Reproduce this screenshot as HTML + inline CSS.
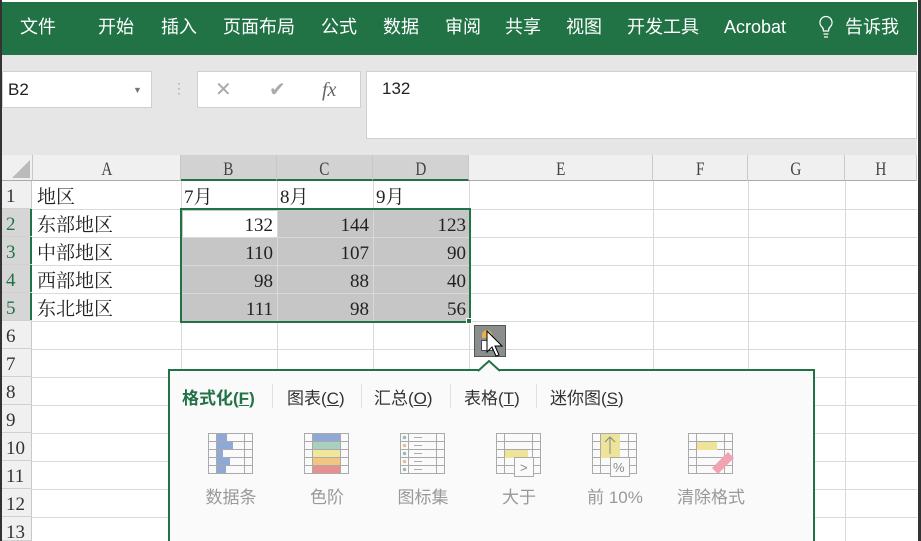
<!DOCTYPE html>
<html><head><meta charset="utf-8"><style>
*{margin:0;padding:0;box-sizing:border-box}
html,body{width:921px;height:541px;overflow:hidden}
body{background:#fff;position:relative;font-family:"Liberation Sans","Noto Sans CJK SC",sans-serif}
.a{position:absolute}
.rib span{position:absolute;top:12px;color:#fff;font-size:18px;line-height:26px;height:26px}
.cell{position:absolute;font-family:"Liberation Serif","Noto Serif CJK SC",serif;font-size:19px;color:#222;line-height:30px;height:28px}
.vl{position:absolute;width:1px;background:#dadada}
.hl{position:absolute;height:1px;background:#dadada}
.ch{position:absolute;top:155px;height:26px;line-height:30px;text-align:center;font-family:"Liberation Serif",serif;font-size:19px;color:#444;border-right:1px solid #c8c8c8}
.ch b{display:inline-block;font-weight:normal;transform:scaleX(.8)}
.rh{position:absolute;left:2px;width:30px;height:28px;line-height:31px;padding-left:4px;font-family:"Liberation Serif",serif;font-size:19px;color:#333;border-bottom:1px solid #d0d0d0}
.tab{position:absolute;top:384px;font-size:17px;color:#333}
.lab{position:absolute;top:483px;font-size:17px;color:#999;text-align:center;width:80px}
</style></head><body>
<div class="a" style="left:0;top:0;width:921px;height:541px;border-left:2px solid #333;border-right:3px solid #333"></div>
<div class="a rib" style="left:2px;top:2px;width:915px;height:53px;background:#217346">
<span style="left:18px">文件</span><span style="left:96px">开始</span><span style="left:159px">插入</span><span style="left:221px">页面布局</span><span style="left:319px">公式</span><span style="left:381px">数据</span><span style="left:443px">审阅</span><span style="left:503px">共享</span><span style="left:564px">视图</span><span style="left:625px">开发工具</span><span style="left:722px">Acrobat</span>
<span style="left:843px">告诉我</span></div>
<svg class="a" style="left:818px;top:15px" width="16" height="24"><path d="M8 1.5a6 6 0 0 0-4 10.5c1 1 1.5 2.5 1.5 4h5c0-1.5.5-3 1.5-4A6 6 0 0 0 8 1.5zM5.5 19h5M6 22h4" fill="none" stroke="#fff" stroke-width="1.3"/></svg>
<div class="a" style="left:2px;top:55px;width:915px;height:100px;background:#e6e6e6"></div>
<div class="a" style="left:2px;top:71px;width:150px;height:37px;background:#fff;border:1px solid #d0d0d0;font-size:17px;color:#222;line-height:36px;padding-left:5px">B2<span style="position:absolute;left:130px;font-size:9px;color:#777">▼</span></div>
<div class="a" style="left:172px;top:80px;color:#aaa;font-size:14px">⋮</div>
<div class="a" style="left:197px;top:71px;width:164px;height:37px;background:#fff;border:1px solid #d0d0d0;color:#aaa;font-size:20px;line-height:36px">
<span style="position:absolute;left:17px">✕</span><span style="position:absolute;left:71px">✔</span><span style="position:absolute;left:124px;font-family:'Liberation Serif',serif;font-style:italic;color:#666">fx</span></div>
<div class="a" style="left:366px;top:71px;width:551px;height:68px;background:#fff;border:1px solid #d0d0d0;font-size:17px;padding:7px 0 0 15px;color:#222">132</div>
<div class="a" style="left:2px;top:155px;width:915px;height:26px;background:#f0f0f0;border-bottom:1px solid #aaa"></div>
<div class="a" style="left:12px;top:160px;width:0;height:0;border-left:18px solid transparent;border-bottom:18px solid #bbb"></div>
<div class="ch" style="left:32px;width:149px;border-left:1px solid #c8c8c8"><b>A</b></div>
<div class="ch" style="left:181px;width:96px;background:#d2d2d2;border-bottom:2px solid #217346"><b>B</b></div>
<div class="ch" style="left:277px;width:96px;background:#d2d2d2;border-bottom:2px solid #217346"><b>C</b></div>
<div class="ch" style="left:373px;width:96px;background:#d2d2d2;border-bottom:2px solid #217346"><b>D</b></div>
<div class="ch" style="left:469px;width:184px"><b>E</b></div>
<div class="ch" style="left:653px;width:95px"><b>F</b></div>
<div class="ch" style="left:748px;width:97px"><b>G</b></div>
<div class="ch" style="left:845px;width:72px"><b>H</b></div>
<div class="vl" style="left:181px;top:181px;height:360px"></div>
<div class="vl" style="left:277px;top:181px;height:360px"></div>
<div class="vl" style="left:373px;top:181px;height:360px"></div>
<div class="vl" style="left:469px;top:181px;height:360px"></div>
<div class="vl" style="left:653px;top:181px;height:360px"></div>
<div class="vl" style="left:748px;top:181px;height:360px"></div>
<div class="vl" style="left:845px;top:181px;height:360px"></div>
<div class="hl" style="left:32px;top:209px;width:885px"></div>
<div class="hl" style="left:32px;top:237px;width:885px"></div>
<div class="hl" style="left:32px;top:265px;width:885px"></div>
<div class="hl" style="left:32px;top:293px;width:885px"></div>
<div class="hl" style="left:32px;top:321px;width:885px"></div>
<div class="hl" style="left:32px;top:349px;width:885px"></div>
<div class="hl" style="left:32px;top:377px;width:885px"></div>
<div class="hl" style="left:32px;top:405px;width:885px"></div>
<div class="hl" style="left:32px;top:433px;width:885px"></div>
<div class="hl" style="left:32px;top:461px;width:885px"></div>
<div class="hl" style="left:32px;top:489px;width:885px"></div>
<div class="hl" style="left:32px;top:517px;width:885px"></div>
<div class="a" style="left:2px;top:181px;width:30px;height:360px;background:#f0f0f0;border-right:1px solid #c8c8c8"></div>
<div class="a" style="left:2px;top:209px;width:30px;height:112px;background:#d6d6d6;border-right:2px solid #217346"></div>
<div class="rh" style="top:181px">1</div><div class="rh" style="top:209px;color:#217346">2</div><div class="rh" style="top:237px;color:#217346">3</div><div class="rh" style="top:265px;color:#217346">4</div><div class="rh" style="top:293px;color:#217346">5</div><div class="rh" style="top:321px">6</div><div class="rh" style="top:349px">7</div><div class="rh" style="top:377px">8</div><div class="rh" style="top:405px">9</div><div class="rh" style="top:433px">10</div><div class="rh" style="top:461px">11</div><div class="rh" style="top:489px">12</div><div class="rh" style="top:517px;height:24px">13</div>
<div class="a" style="left:181px;top:209px;width:288px;height:112px;background:#c6c6c6"></div>
<div class="a" style="left:183px;top:211px;width:94px;height:26px;background:#fff"></div>
<div class="vl" style="left:277px;top:209px;height:112px;background:#d8d8d8"></div>
<div class="vl" style="left:373px;top:209px;height:112px;background:#d8d8d8"></div>
<div class="hl" style="left:181px;top:237px;width:288px;background:#d8d8d8"></div>
<div class="hl" style="left:181px;top:265px;width:288px;background:#d8d8d8"></div>
<div class="hl" style="left:181px;top:293px;width:288px;background:#d8d8d8"></div>
<div class="a" style="left:180px;top:208px;width:291px;height:115px;border:2px solid #217346"></div>
<div class="a" style="left:466px;top:318px;width:6px;height:6px;background:#217346;border:1px solid #fff"></div>
<div class="cell" style="left:37px;top:183px">地区</div>
<div class="cell" style="left:184px;top:183px">7月</div>
<div class="cell" style="left:280px;top:183px">8月</div>
<div class="cell" style="left:376px;top:183px">9月</div>
<div class="cell" style="left:37px;top:211px">东部地区</div>
<div class="cell" style="left:37px;top:239px">中部地区</div>
<div class="cell" style="left:37px;top:267px">西部地区</div>
<div class="cell" style="left:37px;top:295px">东北地区</div>
<div class="cell" style="left:181px;top:211px;width:92px;text-align:right">132</div><div class="cell" style="left:277px;top:211px;width:92px;text-align:right">144</div><div class="cell" style="left:373px;top:211px;width:93px;text-align:right">123</div>
<div class="cell" style="left:181px;top:239px;width:92px;text-align:right">110</div><div class="cell" style="left:277px;top:239px;width:92px;text-align:right">107</div><div class="cell" style="left:373px;top:239px;width:93px;text-align:right">90</div>
<div class="cell" style="left:181px;top:267px;width:92px;text-align:right">98</div><div class="cell" style="left:277px;top:267px;width:92px;text-align:right">88</div><div class="cell" style="left:373px;top:267px;width:93px;text-align:right">40</div>
<div class="cell" style="left:181px;top:295px;width:92px;text-align:right">111</div><div class="cell" style="left:277px;top:295px;width:92px;text-align:right">98</div><div class="cell" style="left:373px;top:295px;width:93px;text-align:right">56</div>
<div class="a" style="left:474px;top:325px;width:32px;height:32px;background:#8a8f8c;border:1px solid #555"></div>
<div class="a" style="left:482px;top:330px;width:10px;height:8px;background:#e8b24a;border-radius:5px 5px 0 0"></div>
<div class="a" style="left:481px;top:340px;width:12px;height:11px;background:#fff;border:1px solid #446"></div>
<svg class="a" style="left:485px;top:330px" width="22" height="28"><path d="M2 1 L2 22 L7 17 L11 26 L14 25 L10 16 L17 16 Z" fill="#fff" stroke="#000" stroke-width="1"/></svg>
<div class="a" style="left:168px;top:369px;width:647px;height:172px;background:#fafafa;border:2px solid #217346;border-bottom:none"></div>
<svg class="a" style="left:478px;top:360px" width="22" height="12"><path d="M0 11 L11 1 L22 11" fill="#fafafa" stroke="#217346" stroke-width="2"/></svg>
<div class="tab" style="left:182px;color:#217346;font-weight:bold">格式化(<u>F</u>)</div>
<div class="a" style="left:272px;top:384px;width:1px;height:24px;background:#e0e0e0"></div>
<div class="tab" style="left:287px">图表(<u>C</u>)</div>
<div class="a" style="left:361px;top:384px;width:1px;height:24px;background:#e0e0e0"></div>
<div class="tab" style="left:374px">汇总(<u>O</u>)</div>
<div class="a" style="left:450px;top:384px;width:1px;height:24px;background:#e0e0e0"></div>
<div class="tab" style="left:464px">表格(<u>T</u>)</div>
<div class="a" style="left:536px;top:384px;width:1px;height:24px;background:#e0e0e0"></div>
<div class="tab" style="left:550px">迷你图(<u>S</u>)</div>
<svg class="a" style="left:200px;top:432px" width="580" height="48">
<g fill="none" stroke="#aaa" stroke-width="1"><rect x="8.5" y="1.5" width="44" height="40"/><path d="M8 9.5h45M8 17.5h45M8 25.5h45M8 33.5h45M16.5 1v41M44.5 1v41"/></g>
<rect x="17" y="2" width="10" height="7" fill="#8fa9d6"/><rect x="17" y="10" width="16" height="7" fill="#8fa9d6"/><rect x="17" y="18" width="6" height="7" fill="#8fa9d6"/><rect x="17" y="26" width="13" height="7" fill="#8fa9d6"/><rect x="17" y="34" width="9" height="7" fill="#8fa9d6"/>
<g transform="translate(96 0)"><g fill="none" stroke="#aaa"><rect x="8.5" y="1.5" width="44" height="40"/><path d="M8 9.5h45M8 17.5h45M8 25.5h45M8 33.5h45M16.5 1v41M44.5 1v41"/></g>
<rect x="17" y="2" width="27" height="7" fill="#8fa9d6"/><rect x="17" y="10" width="27" height="7" fill="#a9cfc0"/><rect x="17" y="18" width="27" height="7" fill="#f0e79a"/><rect x="17" y="26" width="27" height="7" fill="#f2c680"/><rect x="17" y="34" width="27" height="7" fill="#e69090"/></g>
<g transform="translate(192 0)"><g fill="none" stroke="#aaa"><rect x="8.5" y="1.5" width="44" height="40"/><path d="M8 9.5h45M8 17.5h45M8 25.5h45M8 33.5h45M16.5 1v41M44.5 1v41M22 5.5h8M22 13.5h8M22 21.5h8M22 29.5h8M22 37.5h8"/></g>
<circle cx="12.5" cy="5.5" r="1.8" fill="#9bb"/><circle cx="12.5" cy="13.5" r="1.8" fill="#eb9"/><circle cx="12.5" cy="21.5" r="1.8" fill="#9bb"/><circle cx="12.5" cy="29.5" r="1.8" fill="#eb9"/><circle cx="12.5" cy="37.5" r="1.8" fill="#9bb"/></g>
<g transform="translate(288 0)"><g fill="none" stroke="#aaa"><rect x="8.5" y="1.5" width="44" height="40"/><path d="M8 9.5h45M8 17.5h45M8 25.5h45M8 33.5h45M16.5 1v41M44.5 1v41"/></g>
<rect x="17" y="18" width="23" height="8" fill="#ede49a"/><rect x="26.5" y="25.5" width="19" height="19" fill="#fafafa" stroke="#aaa"/><text x="32" y="40" font-size="13" fill="#888" font-family="Liberation Sans">&gt;</text></g>
<g transform="translate(384 0)"><g fill="none" stroke="#aaa"><rect x="8.5" y="1.5" width="44" height="40"/><path d="M8 9.5h45M8 17.5h45M8 25.5h45M8 33.5h45M16.5 1v41M44.5 1v41"/></g>
<rect x="17" y="2" width="19" height="24" fill="#ede49a"/><path d="M26 22V5M21 10l5-5 5 5" stroke="#888" fill="none"/><rect x="26.5" y="25.5" width="19" height="19" fill="#fafafa" stroke="#aaa"/><text x="29" y="40" font-size="13" fill="#888" font-family="Liberation Sans">%</text></g>
<g transform="translate(480 0)"><g fill="none" stroke="#aaa"><rect x="8.5" y="1.5" width="44" height="40"/><path d="M8 9.5h45M8 17.5h45M8 25.5h45M8 33.5h45M16.5 1v41M44.5 1v41"/></g>
<rect x="17" y="10" width="20" height="8" fill="#ede49a"/><path d="M36 42 L52 26 L58 32 L42 48 Z" fill="#f0a3b0" transform="translate(-4 -6)"/></g>
</svg>
<div class="lab" style="left:191px">数据条</div>
<div class="lab" style="left:287px">色阶</div>
<div class="lab" style="left:383px">图标集</div>
<div class="lab" style="left:479px">大于</div>
<div class="lab" style="left:575px">前 10%</div>
<div class="lab" style="left:671px">清除格式</div>
</body></html>
